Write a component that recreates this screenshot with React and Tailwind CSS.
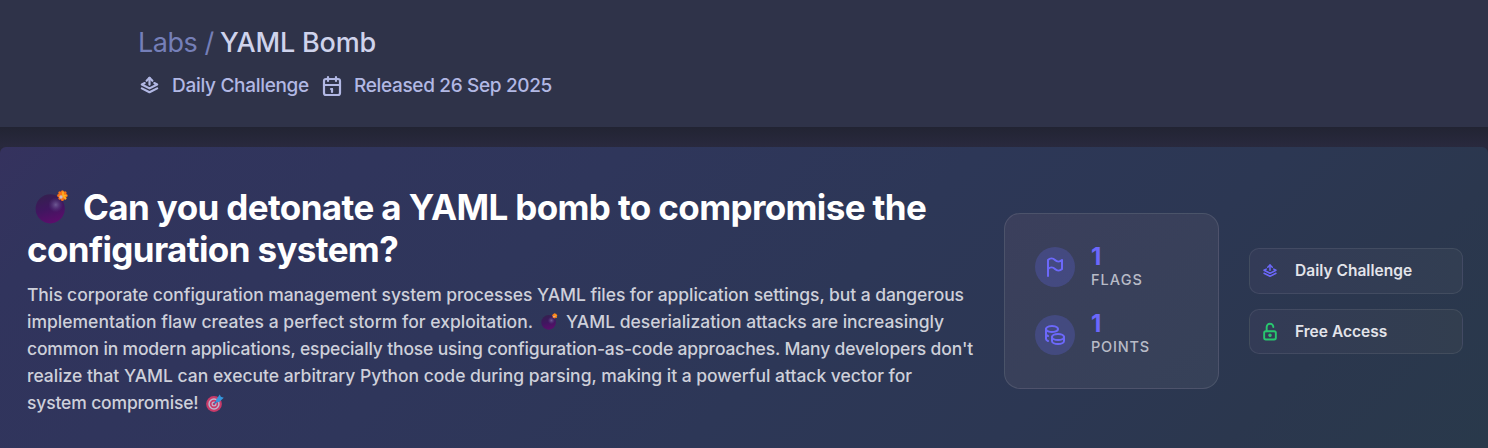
import { TbStackPop, TbCalendar, TbFlag, TbCoins, TbLockOpen } from "react-icons/tb";

function Bomb({ id, className }) {
  return (
    <svg viewBox="0 0 34 34" className={className} aria-hidden="true">
      <defs>
        <linearGradient id={id + "-body"} x1="0.3" y1="0" x2="0.6" y2="1">
          <stop offset="0" stopColor="#34204f" />
          <stop offset="0.5" stopColor="#401660" />
          <stop offset="1" stopColor="#5d0d6c" />
        </linearGradient>
        <radialGradient id={id + "-shine"}>
          <stop offset="0" stopColor="#74619a" stopOpacity="0.9" />
          <stop offset="1" stopColor="#553a80" stopOpacity="0" />
        </radialGradient>
      </defs>
      <circle cx="15.2" cy="18.8" r="14.6" fill={"url(#" + id + "-body)"} />
      <circle cx="20.8" cy="14.8" r="7.5" fill={"url(#" + id + "-shine)"} />
      <g stroke="#f97316" strokeWidth="3" strokeLinecap="round">
        <path d="M27.4 1.8v7.6M23.6 5.6h7.6M24.8 2.9l5.3 5.3M30.1 2.9l-5.3 5.3" />
      </g>
      <path d="M28 2v3.5h3M30.5 8.4l-2-2" stroke="#fbb321" strokeWidth="1.6" fill="none" strokeLinecap="round" />
      <circle cx="26" cy="7" r="1.7" fill="#cbbcc8" />
    </svg>
  );
}

function Target({ className }) {
  return (
    <svg viewBox="0 0 18 18" className={className} aria-hidden="true">
      <circle cx="8" cy="10" r="7.9" fill="#c93a69" />
      <circle cx="8" cy="10" r="5.7" fill="#bdb6cf" />
      <circle cx="8" cy="10" r="4.2" fill="#c93a69" />
      <circle cx="8" cy="10" r="2.5" fill="#bdb6cf" />
      <circle cx="8" cy="10" r="1.3" fill="#c93a69" />
      <path d="M8.2 9.8L13 5" stroke="#2f6fb4" strokeWidth="1.5" />
      <path d="M10.2 5.4L13.8 .4l1 2.4 3 .9-4.7 4.4-3.2.3z" fill="#3496dd" />
    </svg>
  );
}

function Stat({ icon, value, iconMargin, children }) {
  return (
    <div className="flex h-[47px] items-start">
      <span className={"mr-4 flex size-10 items-center justify-center rounded-full bg-[#6366f1]/25 text-[#6c68fb] " + iconMargin}>
        {icon}
      </span>
      <div className="mt-[0.5px] flex flex-col">
        <span className="flex h-[23px] items-center text-[24px] leading-none font-bold text-[#6c68fb]">{value}</span>
        {children}
      </div>
    </div>
  );
}

export default function App() {
  return (
    <div className="flex h-[448px] w-[1488px] flex-col overflow-hidden bg-[#28283d] font-['Inter',sans-serif]">
      <header className="flex h-[127px] shrink-0 flex-col bg-[#2f3349] pt-[23px] pl-[138px]">
        <h2 className="flex h-10 items-center whitespace-pre text-[27px] leading-10">
          <span className="w-[82px] font-normal tracking-[-0.45px] text-[#757fb8]">Labs /</span>
          <span className="font-medium tracking-[-0.19px] text-[#cfd3ec]">YAML Bomb</span>
        </h2>
        <div className="mt-[10px] flex h-[27px] items-center text-[19px] font-medium whitespace-nowrap text-[#b2b8e4]">
          <TbStackPop className="mr-[11px] mb-[3px] size-[23px]" strokeWidth={2.3} />
          <span className="w-[148px] tracking-[-0.3px]">Daily Challenge</span>
          <TbCalendar className="mr-[10px] mb-[2px] size-6" strokeWidth={2.2} />
          <span className="tracking-[-0.34px]">Released 26 Sep 2025</span>
        </div>
      </header>

      <div className="h-5 shrink-0 bg-gradient-to-b from-[#222433] to-[#29293e]" />

      <main className="flex grow rounded-t-md bg-[linear-gradient(135deg,#35325e_0%,#31345d_8%,#2f365b_35%,#2d3757_55%,#2c3753_72%,#2b374e_85%,#29394b_100%)] pl-[27px]">
        <section className="w-[977px] shrink-0 pt-[39px] whitespace-nowrap">
          <h1 className="text-[35px] leading-[42px] font-bold text-white">
            <span className="flex items-center">
              <Bomb id="title-bomb" className="mr-[14px] ml-2 size-[34px]" />
              <span className="tracking-[-0.62px]">Can you detonate a YAML bomb to compromise the</span>
            </span>
            <span className="block tracking-[-0.64px]">configuration system?</span>
          </h1>
          <p className="mt-[11px] text-[17.5px] leading-[27px] font-medium text-[#ced0da]">
            <span className="block tracking-[-0.07px]">
              This corporate configuration management system processes YAML files for application settings, but a dangerous
            </span>
            <span className="flex items-center">
              <span className="w-[514px] tracking-[0.02px]">implementation flaw creates a perfect storm for exploitation.</span>
              <Bomb id="text-bomb" className="mr-2 size-[17px]" />
              <span className="tracking-[-0.02px]">YAML deserialization attacks are increasingly</span>
            </span>
            <span className="block tracking-[-0.155px]">
              common in modern applications, especially those using configuration-as-code approaches. Many developers don't
            </span>
            <span className="block tracking-[-0.02px]">
              realize that YAML can execute arbitrary Python code during parsing, making it a powerful attack vector for
            </span>
            <span className="flex items-center">
              <span className="w-[179px] tracking-[-0.15px]">system compromise!</span>
              <Target className="size-[18px]" />
            </span>
          </p>
        </section>

        <section className="mt-[66px] flex h-[176px] w-[215px] shrink-0 flex-col gap-5 rounded-2xl border border-white/10 bg-gradient-to-br from-[#3b3f5c] to-[#364158] pt-[31px] pl-[30px]">
          <Stat value="1" iconMargin="mt-[2px]" icon={<TbFlag className="size-6" />}>
            <span className="flex h-[23px] items-center text-[14.5px] leading-none font-medium tracking-[1.06px] text-[#b8bbc7]">FLAGS</span>
          </Stat>
          <Stat value="1" iconMargin="mt-[3px]" icon={<TbCoins className="size-6" />}>
            <span className="flex h-[23px] items-center text-[14.5px] leading-none font-medium tracking-[0.8px] text-[#b8bbc7]">POINTS</span>
          </Stat>
        </section>

        <section className="mt-[101px] ml-[30px] flex w-[214px] shrink-0 flex-col gap-[15px] text-[15.5px] font-semibold tracking-[0.02px] text-[#e3e4ea]">
          <div className="flex h-[46px] items-center rounded-[10px] border border-white/8 bg-gradient-to-r from-[#333b57] to-[#323e52] pl-[11px]">
            <TbStackPop className="mr-[16px] size-[18px] text-[#6c68fb]" />
            Daily Challenge
          </div>
          <div className="flex h-[45px] items-center rounded-[10px] border border-white/8 bg-gradient-to-r from-[#333b56] to-[#323e4f] pl-[10px]">
            <TbLockOpen className="mr-[15px] size-5 text-[#28c76f]" strokeWidth={2.3} />
            Free Access
          </div>
        </section>
      </main>
    </div>
  );
}
